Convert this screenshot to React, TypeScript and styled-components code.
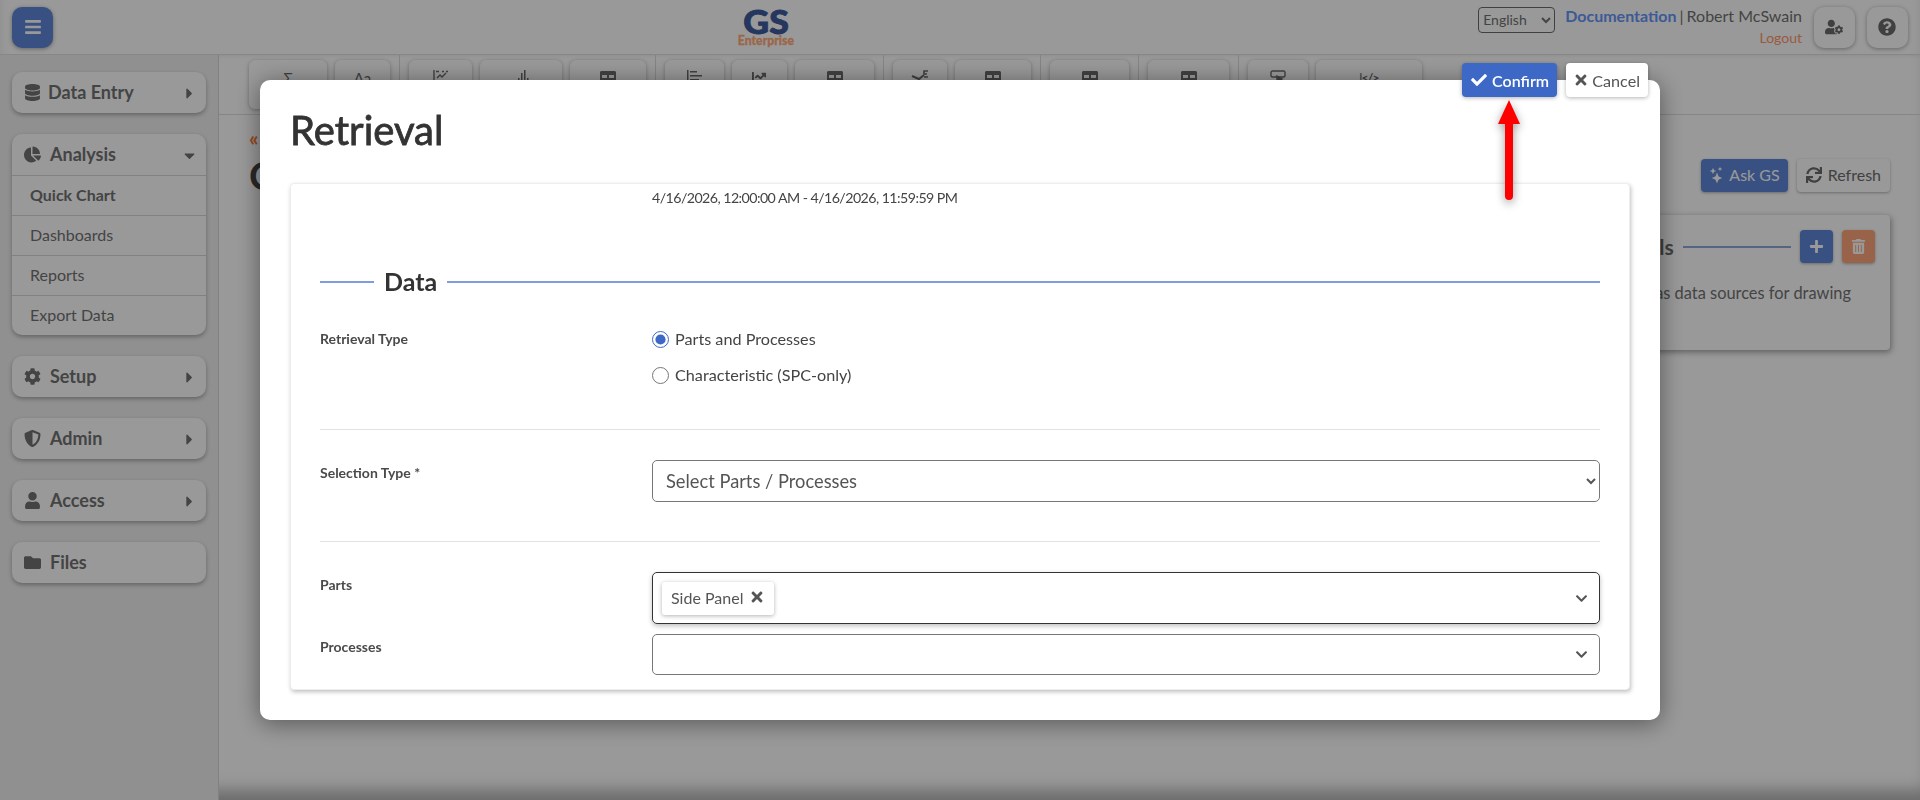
import React from "react";
import styled, { createGlobalStyle } from "styled-components";
import {
  FaBars,
  FaCaretDown,
  FaCaretRight,
  FaChartLine,
  FaChartPie,
  FaCheck,
  FaChevronDown,
  FaCog,
  FaDatabase,
  FaFolder,
  FaPlus,
  FaQuestionCircle,
  FaShieldAlt,
  FaSync,
  FaTable,
  FaTimes,
  FaTrashAlt,
  FaUser,
  FaUserCog,
} from "react-icons/fa";
import { BsStars } from "react-icons/bs";

const GlobalStyle = createGlobalStyle`
  html, body {
    margin: 0;
    height: 100%;
    overflow: hidden;
    background: #fff;
  }
  body, select, button {
    font-family: Lato, "Open Sans", sans-serif;
  }
`;

const Page = styled.div`
  height: 800px;
  display: flex;
  flex-direction: column;
  background: #fff;
  color: #727272;
  box-shadow: inset 0 -18px 16px -8px rgba(0, 0, 0, 0.3);
`;

const Header = styled.header`
  height: 54px;
  flex: none;
  display: flex;
  align-items: center;
  justify-content: space-between;
  padding: 0 12px;
  border-bottom: 1px solid #e2e2e2;
  box-shadow: 0 1px 3px rgba(0, 0, 0, 0.08);
`;

const IconTile = styled.button<{ $primary?: boolean }>`
  width: 41px;
  height: 41px;
  padding: 0;
  border: none;
  border-radius: 10px;
  display: flex;
  align-items: center;
  justify-content: center;
  font-size: 18px;
  background: ${(p) => (p.$primary ? "#5f88d9" : "#fff")};
  color: ${(p) => (p.$primary ? "#fff" : "#6c6c6c")};
  box-shadow: 0 1px 4px rgba(0, 0, 0, 0.35);
`;

const Logo = styled.div`
  width: 56px;
  display: flex;
  flex-direction: column;
  align-items: center;
  font-weight: 900;
`;

const LogoMark = styled.span`
  font-size: 33px;
  line-height: 27px;
  color: #3f5b9e;
  -webkit-text-stroke: 0.9px #3f5b9e;
  transform: scaleX(1.08);
`;

const LogoSub = styled.span`
  margin-top: -1px;
  font-size: 13px;
  line-height: 13px;
  color: #ffac7b;
  -webkit-text-stroke: 0.3px #ffac7b;
  transform: scaleX(0.94);
`;

const HeaderRight = styled.div`
  display: flex;
  align-items: center;
`;

const LangSelect = styled.select`
  width: 77px;
  height: 26px;
  margin: -15px 10px 0 0;
  border: 1px solid #6c6c6c;
  border-radius: 4px;
  background: transparent;
  color: #727272;
  font-size: 14px;
`;

const UserBlock = styled.div`
  display: flex;
  flex-direction: column;
  align-items: flex-end;
  margin-right: 12px;
  font-size: 16px;
  line-height: 20px;
`;

const DocLink = styled.a`
  color: #6696fa;
  font-weight: 700;
`;

const Separator = styled.span`
  margin: 0 3px;
`;

const Logout = styled.a`
  margin-top: 2px;
  font-size: 14px;
  color: #ff966b;
`;

const HeaderTiles = styled.div`
  display: flex;
  gap: 12px;
`;

const Body = styled.div`
  flex: 1;
  min-height: 0;
  display: flex;
`;

const Sidebar = styled.nav`
  width: 219px;
  flex: none;
  box-sizing: border-box;
  padding: 17px 12px 0 12px;
  display: flex;
  flex-direction: column;
  gap: 21px;
  background: #f0f0f0;
  border-right: 1px solid #d8d8d8;
`;

const NavCard = styled.div`
  border-radius: 10px;
  background: #fff;
  box-shadow: 0 2px 4px rgba(0, 0, 0, 0.3);
  overflow: hidden;
`;

const NavHead = styled.div`
  height: 41px;
  box-sizing: border-box;
  display: flex;
  align-items: center;
  padding: 0 8px 2px 12px;
  font-size: 18px;
  font-weight: 700;
`;

const NavIcon = styled.span<{ $gap?: number }>`
  width: 17px;
  display: flex;
  justify-content: center;
  margin: 2px ${(p) => p.$gap ?? 9}px 0 0;
  font-size: 17px;
`;

const NavCaret = styled.span`
  margin: 3px 0 0 auto;
  display: flex;
  font-size: 17px;
`;

const NavItem = styled.div<{ $active?: boolean }>`
  height: 40px;
  box-sizing: border-box;
  display: flex;
  align-items: center;
  padding: 0 0 2px 18px;
  border-top: 1px solid #d8d8d8;
  font-size: 16px;
  font-weight: ${(p) => (p.$active ? 700 : 400)};
`;

const Main = styled.main`
  flex: 1;
  min-width: 0;
  display: flex;
  flex-direction: column;
`;

const Toolbar = styled.div`
  height: 60px;
  flex: none;
  box-sizing: border-box;
  padding: 5px 0 0 30px;
  display: flex;
  align-items: flex-start;
  gap: 8px;
  border-bottom: 1px solid #dedede;
`;

const ToolDivider = styled.div`
  width: 1px;
  height: 54px;
  margin: -5px 1px 0;
  background: #dcdcdc;
`;

const ToolButton = styled.button<{ $w: number }>`
  width: ${(p) => p.$w}px;
  height: 49px;
  flex: none;
  padding: 10px 0 0;
  border: none;
  border-radius: 6px;
  background: #fff;
  color: #6c6c6c;
  font-size: 15px;
  line-height: 16px;
  display: flex;
  justify-content: center;
  align-items: flex-start;
  box-shadow: 0 1px 4px rgba(0, 0, 0, 0.3);
`;

const CodeGlyph = styled.span`
  font-size: 12px;
  font-weight: 700;
  letter-spacing: -0.8px;
`;

const TitleRow = styled.div`
  height: 61px;
  flex: none;
  margin-top: 16px;
  padding: 0 30px;
  display: flex;
  justify-content: space-between;
  align-items: flex-start;
`;

const Crumb = styled.div`
  margin-top: -2px;
  color: #ff7832;
  font-size: 21px;
  line-height: 18px;
  font-weight: 700;
`;

const PageTitle = styled.h1`
  margin: 5px 0 0;
  font-size: 39px;
  line-height: 46px;
  font-weight: 700;
  color: #444;
`;

const TitleActions = styled.div`
  margin-top: 28px;
  display: flex;
  gap: 9px;
`;

const ActionButton = styled.button<{ $primary?: boolean }>`
  height: 33px;
  padding: 0 ${(p) => (p.$primary ? 8 : 9)}px 2px;
  border: none;
  border-radius: 4px;
  display: flex;
  align-items: center;
  gap: ${(p) => (p.$primary ? 4 : 6)}px;
  font-size: 16px;
  background: ${(p) => (p.$primary ? "#5f88d9" : "#fff")};
  color: ${(p) => (p.$primary ? "#fff" : "#6c6c6c")};
  box-shadow: 0 1px 3px rgba(0, 0, 0, 0.3);
`;

const RetrievalsCard = styled.section`
  width: 323px;
  height: 135px;
  box-sizing: border-box;
  margin: 23px 30px 0 auto;
  padding: 15px;
  background: #fff;
  border-radius: 4px;
  box-shadow: 1px 2px 6px rgba(0, 0, 0, 0.4);
`;

const CardHead = styled.div`
  display: flex;
  align-items: center;
  gap: 9px;
`;

const CardTitle = styled.h3`
  margin: 0;
  font-size: 21px;
  font-weight: 700;
  color: #6c6c6c;
`;

const CardRule = styled.div`
  flex: 1;
  height: 2px;
  background: #8fa7dc;
`;

const SquareButton = styled.button<{ $tone: string }>`
  width: 33px;
  height: 33px;
  padding: 0;
  border: none;
  border-radius: 4px;
  display: flex;
  align-items: center;
  justify-content: center;
  font-size: 15px;
  color: #fff;
  background: ${(p) => p.$tone};
  box-shadow: 0 1px 3px rgba(0, 0, 0, 0.3);
`;

const CardText = styled.p`
  margin: 18px 24px 0 0;
  text-align: right;
  font-size: 16.4px;
  line-height: 24px;
`;

const Backdrop = styled.div`
  position: fixed;
  inset: 0;
  background: rgba(0, 0, 0, 0.4);
`;

const ModalLayer = styled.div`
  position: fixed;
  inset: 0;
  display: flex;
  align-items: center;
  justify-content: center;
`;

const Modal = styled.div`
  position: relative;
  width: 1400px;
  height: 640px;
  box-sizing: border-box;
  padding: 27px 30px 30px;
  background: #fff;
  border-radius: 10px;
  box-shadow: 0 3px 24px rgba(0, 0, 0, 0.45);
  color: #444;
`;

const ModalTitle = styled.h2`
  margin: 0 0 30px;
  font-size: 40px;
  line-height: 46px;
  font-weight: 400;
  -webkit-text-stroke: 0.8px #333;
  color: #333;
`;

const ModalActions = styled.div`
  position: absolute;
  top: -17px;
  right: 12px;
  display: flex;
  gap: 9px;
`;

const ModalButton = styled.button<{ $primary?: boolean }>`
  height: 34px;
  padding: 0 8px 0 ${(p) => (p.$primary ? 9 : 7)}px;
  border: none;
  border-radius: 4px;
  display: flex;
  align-items: center;
  gap: ${(p) => (p.$primary ? 5 : 3)}px;
  font-size: ${(p) => (p.$primary ? 16 : 16.2)}px;
  font-weight: ${(p) => (p.$primary ? 600 : 400)};
  background: ${(p) => (p.$primary ? "#3d68c6" : "#fff")};
  color: ${(p) => (p.$primary ? "#fff" : "#555")};
  box-shadow: 0 1px 4px rgba(0, 0, 0, 0.3);
  svg {
    font-size: 16px;
  }
`;

const ArrowMark = styled.svg`
  position: absolute;
  top: 19px;
  left: 1237px;
  filter: drop-shadow(0 3px 5px rgba(0, 0, 0, 0.4));
`;

const FormCard = styled.div`
  height: 507px;
  box-sizing: border-box;
  padding: 5px 29px 0;
  background: #fff;
  border: 1px solid #eee;
  border-radius: 4px;
  box-shadow: 1px 2px 4px rgba(0, 0, 0, 0.25);
  overflow: hidden;
`;

const DateText = styled.div`
  padding-left: 332px;
  font-size: 14.2px;
  letter-spacing: -0.55px;
  line-height: 18px;
`;

const Legend = styled.div`
  height: 30px;
  margin-top: 60px;
  display: flex;
  align-items: center;
  gap: 10px;
`;

const LegendTitle = styled.span`
  margin-top: -2px;
  font-size: 25px;
  font-weight: 700;
  color: #333;
`;

const LegendLine = styled.div<{ $grow?: boolean }>`
  height: 2px;
  background: #7f9ce0;
  ${(p) => (p.$grow ? "flex: 1;" : "width: 54px;")}
`;

const FormRow = styled.div<{ $gap: number }>`
  display: grid;
  grid-template-columns: 332px 1fr;
  margin-top: ${(p) => p.$gap}px;
`;

const FieldLabel = styled.div<{ $offset?: number }>`
  padding-top: ${(p) => p.$offset ?? 4}px;
  font-size: 14px;
  line-height: 18px;
  font-weight: 700;
  color: #4a4a4a;
`;

const RadioGroup = styled.div`
  display: flex;
  flex-direction: column;
  gap: 16px;
`;

const RadioLine = styled.label`
  height: 20px;
  display: flex;
  align-items: center;
  gap: 6px;
  font-size: 16.2px;
`;

const RadioText = styled.span`
  margin-top: -2px;
`;

const Radio = styled.input`
  width: 17px;
  height: 17px;
  margin: 0;
  accent-color: #3d68c6;
`;

const Rule = styled.hr<{ $top: number }>`
  height: 1px;
  margin: ${(p) => p.$top}px 0 0;
  border: none;
  background: #e2e2e2;
`;

const NativeSelect = styled.select`
  width: 100%;
  height: 42px;
  padding-left: 9px;
  border: 1px solid #777;
  border-radius: 5px;
  background: #fff;
  color: #555;
  font-size: 18.3px;
`;

const MultiBox = styled.div<{ $focused?: boolean }>`
  height: ${(p) => (p.$focused ? 52 : 41)}px;
  box-sizing: border-box;
  display: flex;
  align-items: center;
  padding: 0 11px 0 9px;
  border: 1px solid ${(p) => (p.$focused ? "#333" : "#777")};
  border-radius: 5px;
  ${(p) => (p.$focused ? "box-shadow: 0 2px 5px rgba(0, 0, 0, 0.25);" : "")}
`;

const Tag = styled.span`
  height: 33px;
  box-sizing: border-box;
  display: flex;
  align-items: center;
  gap: 6px;
  padding: 0 9px 2px;
  border-radius: 3px;
  font-size: 16px;
  color: #555;
  box-shadow: 0 1px 4px rgba(0, 0, 0, 0.3);
`;

const Chevron = styled(FaChevronDown)`
  margin-left: auto;
  font-size: 13px;
  color: #555;
`;

const BarsIcon = () => (
  <svg width="15" height="16" viewBox="0 0 15 16" fill="currentColor">
    <path d="M1 12h1.5v3H1zM4 8h1.5v7H4zM7 3h1.5v12H7zM10 0h1.5v15H10zM13 8h1.5v7H13z" />
  </svg>
);

const ScatterIcon = () => (
  <svg width="16" height="16" viewBox="0 0 16 16" fill="none" stroke="currentColor" strokeWidth="1.4">
    <path d="M1 0v15h15" />
    <path d="M3 1.5h3M9 1.5h2M13 1.5h2M4 8l3-3 2 2 4-4" />
  </svg>
);

const HBarsIcon = () => (
  <svg width="15" height="16" viewBox="0 0 15 16" fill="currentColor">
    <path d="M0 0h1.5v16H0zM3 1h7v1.6H3zM3 5h12v1.6H3zM3 9h9v1.6H3z" />
  </svg>
);

const WrenchIcon = () => (
  <svg width="18" height="16" viewBox="0 0 18 16" fill="none" stroke="currentColor" strokeWidth="2">
    <path d="M1 6l7 3 5-4" />
    <path d="M17 1h-4v3h3M13 7h4" strokeWidth="1.6" />
    <circle cx="8" cy="12" r="1.6" />
  </svg>
);

const ScreenIcon = () => (
  <svg width="16" height="16" viewBox="0 0 16 16" fill="none" stroke="currentColor" strokeWidth="1.4">
    <rect x="1" y="1" width="14" height="6" rx="1.5" />
    <path d="M7 6l5 3-2 1 1 3-1.5.5-1-3-1.5 1z" fill="currentColor" />
  </svg>
);

type ToolItem = { w: number; icon: React.ReactNode } | "divider";

const tools: ToolItem[] = [
  { w: 78, icon: "Σ" },
  { w: 55, icon: "Aa" },
  "divider",
  { w: 63, icon: <ScatterIcon /> },
  { w: 82, icon: <BarsIcon /> },
  { w: 76, icon: <FaTable size={16} /> },
  "divider",
  { w: 59, icon: <HBarsIcon /> },
  { w: 55, icon: <FaChartLine size={15} /> },
  { w: 79, icon: <FaTable size={16} /> },
  "divider",
  { w: 54, icon: <WrenchIcon /> },
  { w: 76, icon: <FaTable size={16} /> },
  "divider",
  { w: 79, icon: <FaTable size={16} /> },
  "divider",
  { w: 81, icon: <FaTable size={16} /> },
  "divider",
  { w: 60, icon: <ScreenIcon /> },
  { w: 106, icon: <CodeGlyph>|&lt;/&gt;</CodeGlyph> },
];

export default function App() {
  return (
    <>
      <GlobalStyle />
      <Page>
        <Header>
          <IconTile $primary>
            <FaBars />
          </IconTile>
          <Logo>
            <LogoMark>GS</LogoMark>
            <LogoSub>Enterprise</LogoSub>
          </Logo>
          <HeaderRight>
            <LangSelect defaultValue="English">
              <option>English</option>
            </LangSelect>
            <UserBlock>
              <div>
                <DocLink>Documentation</DocLink>
                <Separator>|</Separator>
                Robert McSwain
              </div>
              <Logout>Logout</Logout>
            </UserBlock>
            <HeaderTiles>
              <IconTile>
                <FaUserCog />
              </IconTile>
              <IconTile>
                <FaQuestionCircle />
              </IconTile>
            </HeaderTiles>
          </HeaderRight>
        </Header>
        <Body>
          <Sidebar>
            <NavCard>
              <NavHead>
                <NavIcon $gap={7}>
                  <FaDatabase />
                </NavIcon>
                Data Entry
                <NavCaret>
                  <FaCaretRight />
                </NavCaret>
              </NavHead>
            </NavCard>
            <NavCard>
              <NavHead>
                <NavIcon>
                  <FaChartPie />
                </NavIcon>
                Analysis
                <NavCaret>
                  <FaCaretDown />
                </NavCaret>
              </NavHead>
              <NavItem $active>Quick Chart</NavItem>
              <NavItem>Dashboards</NavItem>
              <NavItem>Reports</NavItem>
              <NavItem>Export Data</NavItem>
            </NavCard>
            <NavCard>
              <NavHead>
                <NavIcon>
                  <FaCog />
                </NavIcon>
                Setup
                <NavCaret>
                  <FaCaretRight />
                </NavCaret>
              </NavHead>
            </NavCard>
            <NavCard>
              <NavHead>
                <NavIcon>
                  <FaShieldAlt />
                </NavIcon>
                Admin
                <NavCaret>
                  <FaCaretRight />
                </NavCaret>
              </NavHead>
            </NavCard>
            <NavCard>
              <NavHead>
                <NavIcon>
                  <FaUser />
                </NavIcon>
                Access
                <NavCaret>
                  <FaCaretRight />
                </NavCaret>
              </NavHead>
            </NavCard>
            <NavCard>
              <NavHead>
                <NavIcon>
                  <FaFolder />
                </NavIcon>
                Files
              </NavHead>
            </NavCard>
          </Sidebar>
          <Main>
            <Toolbar>
              {tools.map((t, i) =>
                t === "divider" ? (
                  <ToolDivider key={i} />
                ) : (
                  <ToolButton key={i} $w={t.w}>
                    {t.icon}
                  </ToolButton>
                )
              )}
            </Toolbar>
            <TitleRow>
              <div>
                <Crumb>«</Crumb>
                <PageTitle>C</PageTitle>
              </div>
              <TitleActions>
                <ActionButton $primary>
                  <BsStars />
                  Ask GS
                </ActionButton>
                <ActionButton>
                  <FaSync />
                  Refresh
                </ActionButton>
              </TitleActions>
            </TitleRow>
            <RetrievalsCard>
              <CardHead>
                <CardTitle>Retrievals</CardTitle>
                <CardRule />
                <SquareButton $tone="#5f88d9">
                  <FaPlus />
                </SquareButton>
                <SquareButton $tone="#ffa67a">
                  <FaTrashAlt />
                </SquareButton>
              </CardHead>
              <CardText>as data sources for drawing</CardText>
            </RetrievalsCard>
          </Main>
        </Body>
      </Page>
      <Backdrop />
      <ModalLayer>
        <Modal>
          <ModalActions>
            <ModalButton $primary>
              <FaCheck />
              Confirm
            </ModalButton>
            <ModalButton>
              <FaTimes />
              Cancel
            </ModalButton>
          </ModalActions>
          <ArrowMark width="24" height="102" viewBox="0 0 24 102">
            <path d="M12 1L23 25H16V97a4 4 0 0 1-8 0V25H1z" fill="#ff0000" />
          </ArrowMark>
          <ModalTitle>Retrieval</ModalTitle>
          <FormCard>
            <DateText>4/16/2026, 12:00:00 AM - 4/16/2026, 11:59:59 PM</DateText>
            <Legend>
              <LegendLine />
              <LegendTitle>Data</LegendTitle>
              <LegendLine $grow />
            </Legend>
            <FormRow $gap={32}>
              <FieldLabel $offset={1}>Retrieval Type</FieldLabel>
              <RadioGroup>
                <RadioLine>
                  <Radio type="radio" name="kind" defaultChecked />
                  <RadioText>Parts and Processes</RadioText>
                </RadioLine>
                <RadioLine>
                  <Radio type="radio" name="kind" />
                  <RadioText>Characteristic (SPC-only)</RadioText>
                </RadioLine>
              </RadioGroup>
            </FormRow>
            <Rule $top={44} />
            <FormRow $gap={30}>
              <FieldLabel>Selection Type *</FieldLabel>
              <NativeSelect defaultValue="Select Parts / Processes">
                <option>Select Parts / Processes</option>
              </NativeSelect>
            </FormRow>
            <Rule $top={39} />
            <FormRow $gap={30}>
              <FieldLabel>Parts</FieldLabel>
              <MultiBox $focused>
                <Tag>
                  Side Panel
                  <FaTimes size={16} />
                </Tag>
                <Chevron />
              </MultiBox>
            </FormRow>
            <FormRow $gap={10}>
              <FieldLabel>Processes</FieldLabel>
              <MultiBox>
                <Chevron />
              </MultiBox>
            </FormRow>
          </FormCard>
        </Modal>
      </ModalLayer>
    </>
  );
}
